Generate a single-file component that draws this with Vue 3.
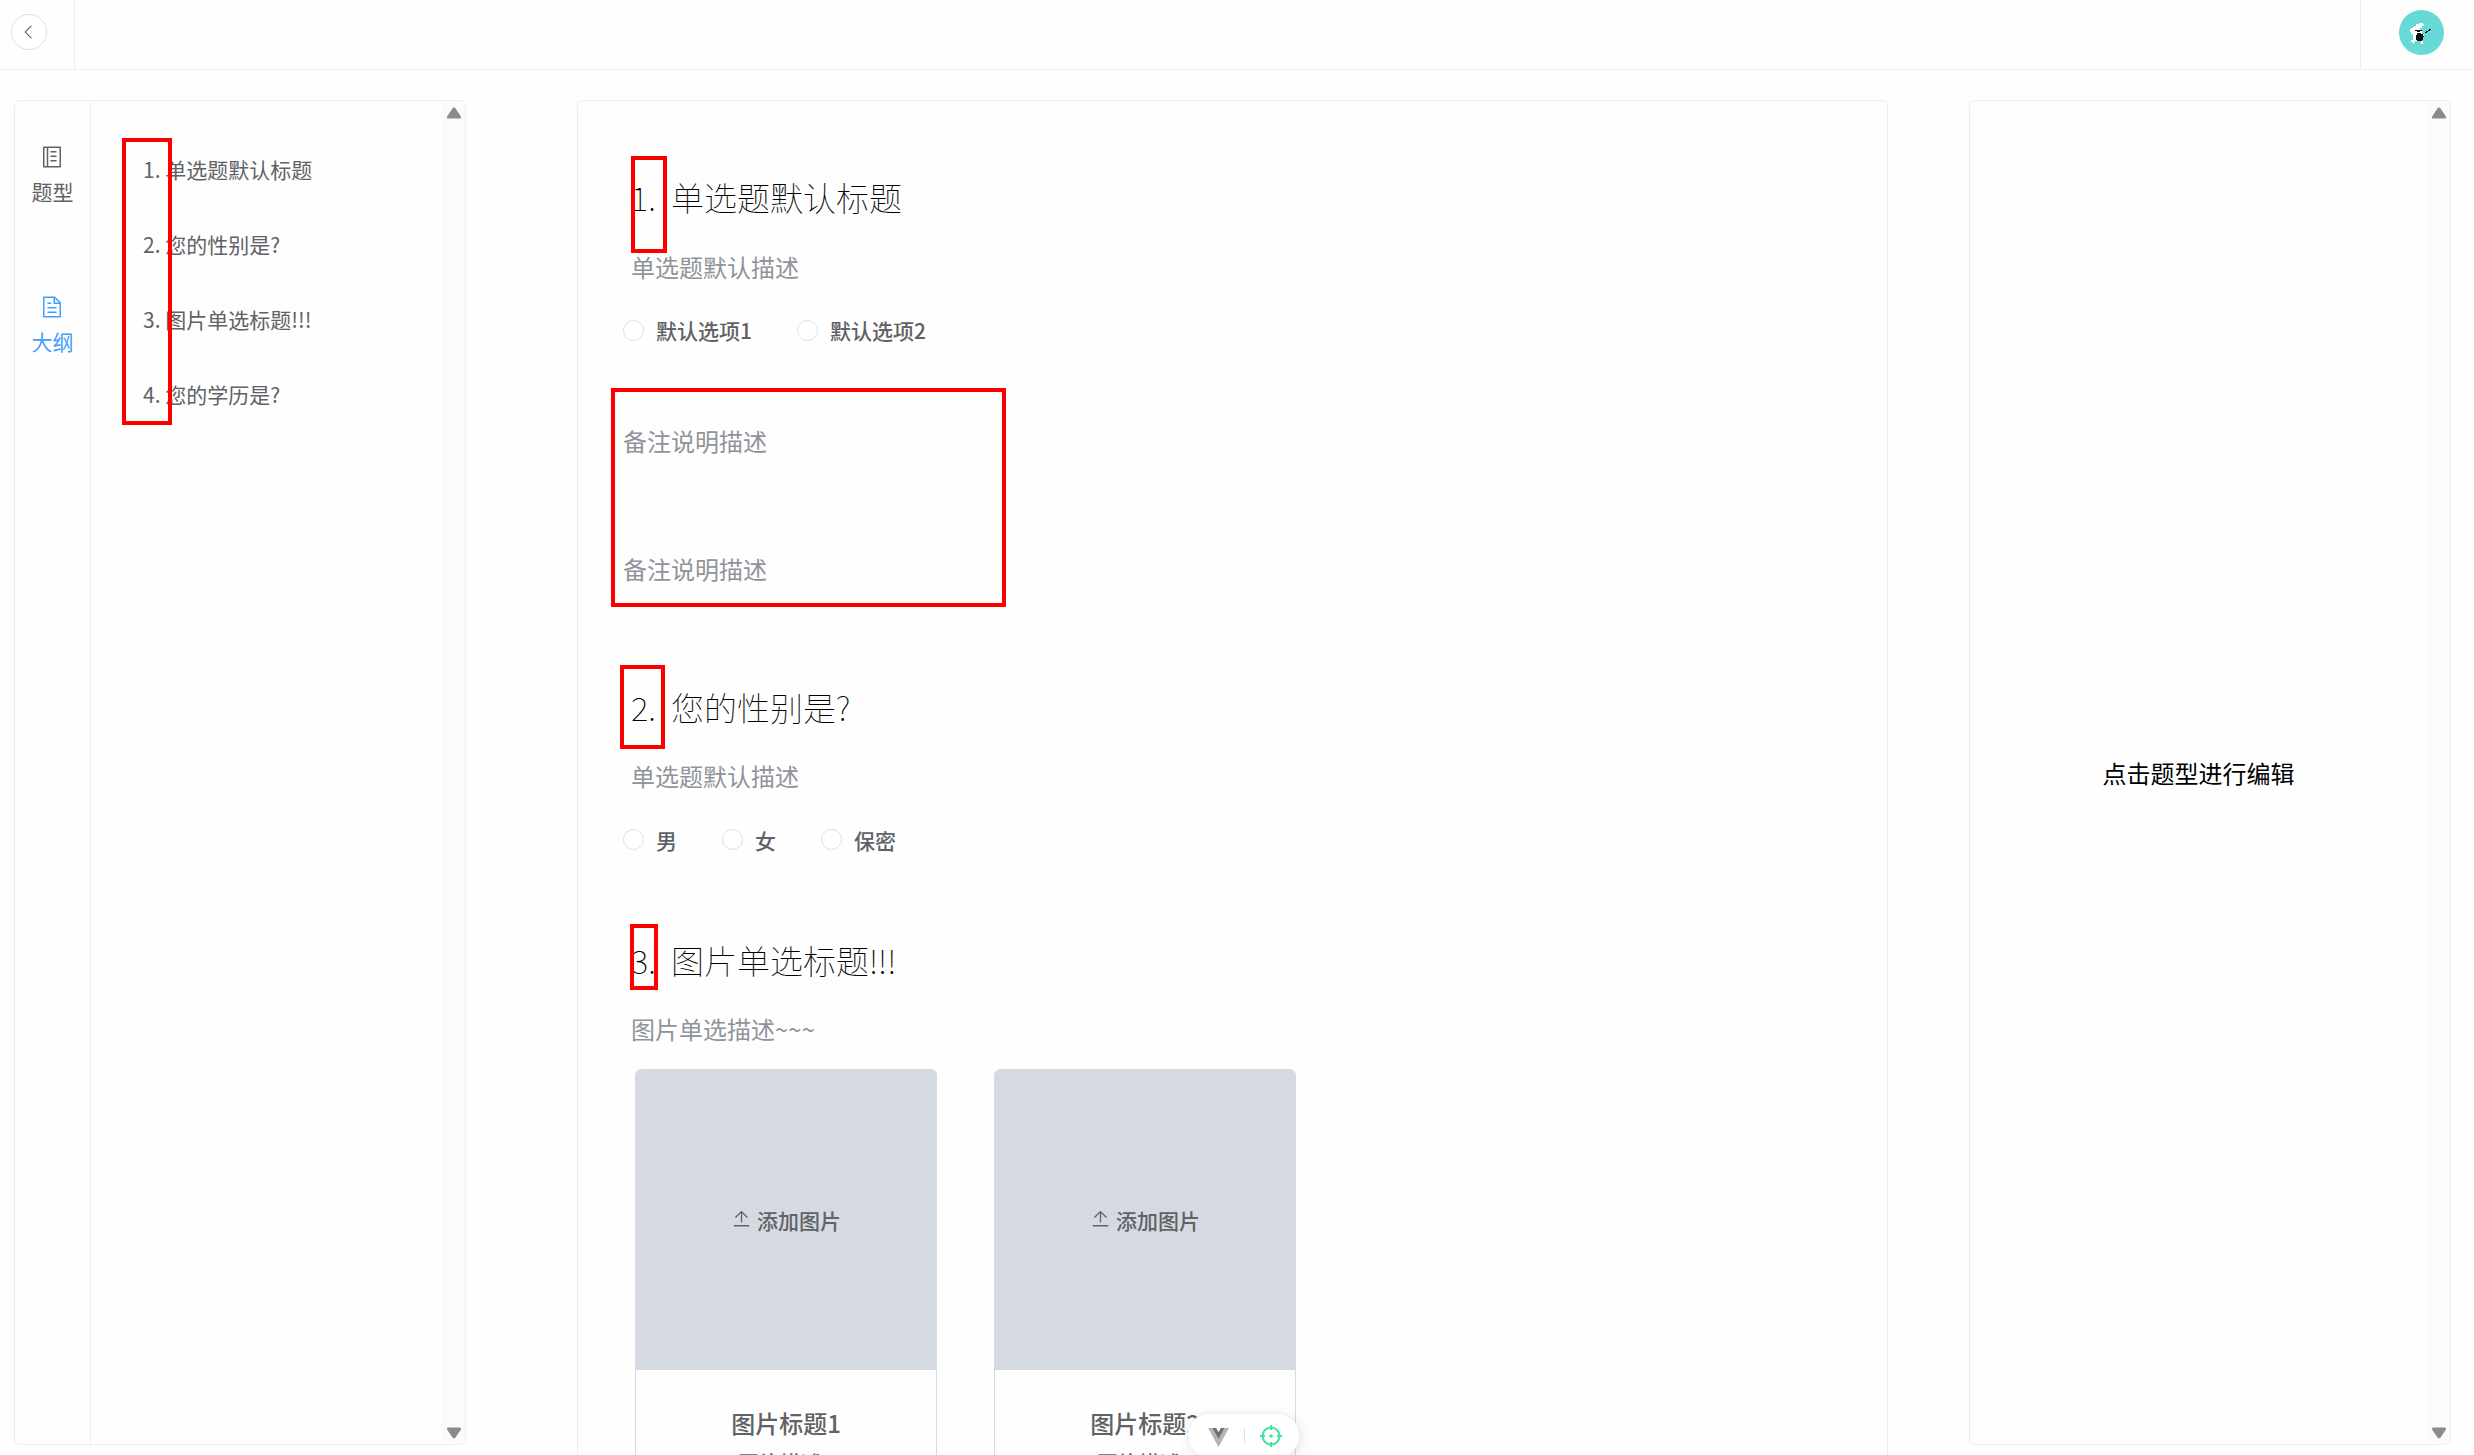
<template>
  <div class="editor-page">
    <header class="header">
      <div class="header-left">
        <button class="back-btn">
          <svg viewBox="0 0 1024 1024" width="18" height="18">
            <path fill="currentColor" d="M609.408 149.376 277.76 489.6a32 32 0 0 0 0 44.672l331.648 340.352a29.12 29.12 0 0 0 41.728 0 30.592 30.592 0 0 0 0-42.752L339.264 511.936l311.872-319.872a30.592 30.592 0 0 0 0-42.688 29.12 29.12 0 0 0-41.728 0" />
          </svg>
        </button>
      </div>
      <div class="header-right">
        <div class="avatar">
          <svg viewBox="0 0 45 45" width="45" height="45" shape-rendering="crispEdges">
            <path fill="#fff" d="M20 13h4v1h1v2h-2v2h-2v2h2v5h2v2h-2v4h1v3h-2v-3h-6v1h-1v2h-1v-2h-2v-2h2v-6h-2v-2h-1v-3h1v-1h2v-1h1v-1h2v-2h2z" />
            <path fill="#111" d="M16 20h7v1h-2v1h-3v-1h-2zM18 23h4v1h2v2h1v1h-1v3h-1v1h-5v-1h-1v-5h1zM30 19h2v1h-1v1h-2v1h-1v1h-2v-1h1v-1h2v-1h1z" />
          </svg>
        </div>
      </div>
    </header>

    <main class="workspace">
      <section class="panel panel-left">
        <nav class="tabs">
          <div v-for="tab in tabs" :key="tab.name" class="tab" :class="{ active: tab.active }">
            <svg viewBox="0 0 1024 1024" width="24" height="24">
              <path v-for="(d, i) in tab.paths" :key="i" fill="currentColor" :d="d" />
            </svg>
            <span>{{ tab.name }}</span>
          </div>
        </nav>
        <div class="outline">
          <div v-for="(item, i) in outline" :key="item" class="outline-item">{{ i + 1 }}. {{ item }}</div>
          <div class="mark mark-outline"></div>
        </div>
        <div class="scrollbar">
          <svg viewBox="0 0 16 12" width="16" height="12"><path :d="arrowUp" fill="#8b8b8b" /></svg>
          <svg class="down" viewBox="0 0 16 12" width="16" height="12"><path :d="arrowUp" fill="#8b8b8b" /></svg>
        </div>
      </section>

      <section class="panel panel-center">
        <div class="question first">
          <h1 class="title"><span class="serial">1.</span>单选题默认标题</h1>
          <p class="desc">单选题默认描述</p>
          <div class="options">
            <label v-for="o in ['默认选项1', '默认选项2']" :key="o" class="radio"><i></i><span>{{ o }}</span></label>
          </div>
          <div class="mark mark-one"></div>
        </div>
        <div class="notes">
          <p>备注说明描述</p>
          <p>备注说明描述</p>
          <div class="mark mark-notes"></div>
        </div>
        <div class="question second">
          <h1 class="title"><span class="serial">2.</span>您的性别是?</h1>
          <p class="desc">单选题默认描述</p>
          <div class="options">
            <label v-for="o in ['男', '女', '保密']" :key="o" class="radio"><i></i><span>{{ o }}</span></label>
          </div>
          <div class="mark mark-two"></div>
        </div>
        <div class="question third">
          <h1 class="title"><span class="serial">3.</span>图片单选标题!!!</h1>
          <p class="desc">图片单选描述~~~</p>
          <div class="pictures">
            <div v-for="n in 2" :key="n" class="picture">
              <div class="upload">
                <svg viewBox="0 0 1024 1024" width="21" height="21">
                  <path fill="currentColor" d="M160 832h704a32 32 0 1 1 0 64H160a32 32 0 1 1 0-64m384-578.304V704h-64V247.296L237.248 490.048 192 444.8 508.8 128l316.8 316.8-45.312 45.248z" />
                </svg>
                <span>添加图片</span>
              </div>
              <div class="picture-title">图片标题{{ n }}</div>
              <div class="picture-desc">图片描述{{ n }}</div>
            </div>
          </div>
          <div class="mark mark-three"></div>
        </div>
      </section>

      <section class="panel panel-right">
        <div class="empty">点击题型进行编辑</div>
        <div class="scrollbar">
          <svg viewBox="0 0 16 12" width="16" height="12"><path :d="arrowUp" fill="#8b8b8b" /></svg>
          <svg class="down" viewBox="0 0 16 12" width="16" height="12"><path :d="arrowUp" fill="#8b8b8b" /></svg>
        </div>
      </section>
    </main>

    <div class="devtools">
      <svg class="vue-logo" viewBox="0 0 22 20" width="21" height="19">
        <path fill="#b4b4b4" d="M0 0h4.5L11 11.5 17.5 0H22L11 20z" />
        <path fill="#6f6f6f" d="M4.5 0h4L11 4.5 13.5 0h4L11 11.5z" />
      </svg>
      <span class="divider"></span>
      <svg viewBox="0 0 24 24" width="24" height="24" fill="none" stroke="#42e39b" stroke-width="2">
        <circle cx="12" cy="12" r="8.5" />
        <path d="M12 1v5M12 18v5M1 12h5M18 12h5" />
        <circle cx="12" cy="12" r="1.8" fill="#42e39b" stroke="none" />
      </svg>
    </div>
  </div>
</template>

<script setup>
const arrowUp = 'M8 .6q1.1 0 1.9 1.3l4.7 7q1.4 2.6-1 2.6H2.4q-2.4 0-1-2.6l4.7-7Q6.9 .6 8 .6z'

const tabs = [
  {
    name: '题型',
    active: false,
    paths: [
      'M192 128v768h640V128zm-32-64h704a32 32 0 0 1 32 32v832a32 32 0 0 1-32 32H160a32 32 0 0 1-32-32V96a32 32 0 0 1 32-32',
      'M288 128h64v768h-64zM448 256h256v64H448zM448 448h256v64H448zM448 640h256v64H448z'
    ]
  },
  {
    name: '大纲',
    active: true,
    paths: [
      'M832 384H576V128H192v768h640zm-26.496-64L640 154.496V320zM160 64h480l256 256v608a32 32 0 0 1-32 32H160a32 32 0 0 1-32-32V96a32 32 0 0 1 32-32m160 448h384v64H320zm0-192h160v64H320zm0 384h384v64H320z'
    ]
  }
]

const outline = ['单选题默认标题', '您的性别是?', '图片单选标题!!!', '您的学历是?']
</script>

<style>
html,
body {
  overflow: hidden;
  background: #fff;
}
</style>

<style scoped>
.editor-page {
  position: relative;
  height: 1455px;
  overflow: hidden;
  background: #fefefe;
  font-family: "Noto Sans CJK SC", "Noto Sans", sans-serif;
  color: #000;
}
.header {
  display: flex;
  justify-content: space-between;
  box-sizing: border-box;
  height: 70px;
  border-bottom: 1px solid #ebedf7;
}
.header-left {
  box-sizing: border-box;
  width: 75px;
  padding: 14px 0 0 11px;
  border-right: 1px solid #ebedf7;
}
.back-btn {
  display: flex;
  align-items: center;
  justify-content: center;
  width: 36px;
  height: 36px;
  padding: 0;
  border: 1px solid #dcdfe6;
  border-radius: 50%;
  background: #fff;
  color: #606266;
}
.header-right {
  box-sizing: border-box;
  width: 114px;
  padding: 10px 0 0 38px;
  border-left: 1px solid #ebedf7;
}
.avatar {
  width: 45px;
  height: 45px;
  overflow: hidden;
  border-radius: 50%;
  background: #67dad6;
}
.avatar svg {
  display: block;
}
.workspace {
  display: flex;
  align-items: flex-start;
  padding: 30px 22px 0 14px;
}
.panel {
  display: flex;
  box-sizing: border-box;
  flex: none;
  height: 1345px;
  border: 1px solid #ebedf7;
  border-radius: 6px;
}
.panel-left {
  width: 452px;
}
.tabs {
  display: flex;
  flex-direction: column;
  align-items: center;
  gap: 82px;
  box-sizing: border-box;
  width: 76px;
  padding-top: 44px;
  border-right: 1px solid #ebedf7;
}
.tab {
  display: flex;
  flex-direction: column;
  align-items: center;
  height: 68px;
  font-size: 21px;
  line-height: 31px;
  color: #606266;
}
.tab svg {
  margin-right: 1px;
}
.tab span {
  margin-top: 7px;
}
.tab.active {
  color: #409eff;
}
.outline {
  position: relative;
  flex: 1;
  padding: 53px 0 0 52px;
}
.outline-item {
  height: 75px;
  font-size: 21px;
  line-height: 31px;
  color: #606266;
}
.scrollbar {
  display: flex;
  flex-direction: column;
  align-items: center;
  justify-content: space-between;
  box-sizing: border-box;
  width: 23px;
  padding: 6px 0 5px;
  border-radius: 0 5px 5px 0;
  background: #fbfbfb;
}
.scrollbar .down {
  transform: rotate(180deg);
}
.panel-center {
  flex-direction: column;
  width: 1311px;
  height: 1400px;
  margin-left: 111px;
  padding: 71px 45px 0;
}
.question {
  position: relative;
}
.title {
  display: flex;
  height: 50px;
  margin: 0;
  font-size: 33px;
  font-weight: 100;
  line-height: 50px;
  padding-left: 8px;
}
.serial {
  width: 40px;
}
.desc {
  margin: 0;
  padding: 27px 0 0 8px;
  font-size: 24px;
  line-height: 36px;
  color: #909399;
}
.options {
  display: flex;
  gap: 45px;
  height: 49px;
  margin-top: 21px;
}
.radio {
  display: flex;
  align-items: center;
  font-size: 21px;
  font-weight: 500;
  color: #606266;
}
.radio i {
  box-sizing: border-box;
  width: 21px;
  height: 21px;
  margin-right: 12px;
  border: 1px solid #dcdfe6;
  border-radius: 50%;
  background: #fff;
}
.first .radio span {
  margin-bottom: 2px;
}
.notes {
  position: relative;
  display: flex;
  flex-direction: column;
  gap: 92px;
  margin-top: 68px;
}
.notes p {
  height: 36px;
  margin: 0;
  font-size: 24px;
  line-height: 36px;
  color: #909399;
}
.second {
  margin-top: 95px;
}
.third {
  margin-top: 71px;
}
.second .desc,
.third .desc {
  padding-top: 26px;
}
.pictures {
  display: flex;
  gap: 57px;
  padding: 22px 0 0 12px;
}
.picture {
  box-sizing: border-box;
  width: 302px;
  height: 450px;
  border: 1px solid #d5d9e2;
  border-radius: 6px;
  overflow: hidden;
  text-align: center;
  color: #606266;
}
.upload {
  display: flex;
  align-items: center;
  justify-content: center;
  gap: 5px;
  height: 300px;
  background: #d5d9e2;
  font-size: 21px;
  font-weight: 500;
}
.upload svg {
  margin-bottom: 3px;
}
.picture-title {
  margin-top: 35px;
  font-size: 24px;
  font-weight: 500;
  line-height: 36px;
}
.picture-desc {
  margin-top: 6px;
  font-size: 21px;
  font-weight: 500;
  line-height: 31px;
}
.panel-right {
  width: 482px;
  margin-left: 81px;
}
.empty {
  display: flex;
  flex: 1;
  align-items: center;
  justify-content: center;
  font-size: 24px;
}

/* 红色标注框 */
.mark {
  position: absolute;
  box-sizing: border-box;
  border: 4px solid #f00;
  pointer-events: none;
}
.mark-outline {
  top: 37px;
  left: 31px;
  width: 50px;
  height: 287px;
}
.mark-one {
  top: -16px;
  left: 8px;
  width: 36px;
  height: 97px;
}
.mark-notes {
  top: -35px;
  left: -12px;
  width: 395px;
  height: 219px;
}
.mark-two {
  top: -17px;
  left: -3px;
  width: 45px;
  height: 84px;
}
.mark-three {
  top: -11px;
  left: 7px;
  width: 28px;
  height: 66px;
}
.devtools {
  position: absolute;
  left: 1187px;
  top: 1413px;
  display: flex;
  align-items: center;
  box-sizing: border-box;
  width: 113px;
  height: 45px;
  padding-left: 20px;
  border: 1px solid #f0f0f0;
  border-radius: 23px;
  background: #fff;
  box-shadow: 2px 2px 12px rgba(0, 0, 0, 0.1);
}
.vue-logo {
  margin-top: 3px;
}
.divider {
  width: 1px;
  height: 15px;
  margin: 0 14px 0 15px;
  background: #ddd;
}
</style>
